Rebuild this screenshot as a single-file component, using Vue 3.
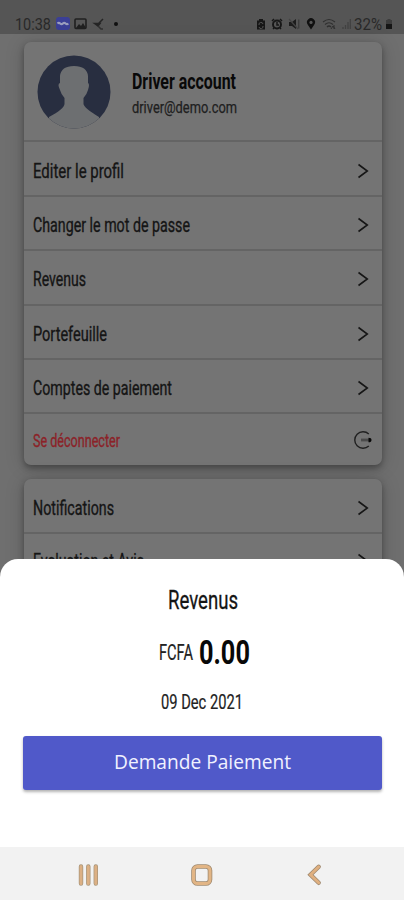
<script setup>
const account = [
  { label: 'Editer le profil', width: 91 },
  { label: 'Changer le mot de passe', width: 157 },
  { label: 'Revenus', width: 53 },
  { label: 'Portefeuille', width: 74 },
  { label: 'Comptes de paiement', width: 139 },
  { label: 'Se déconnecter', width: 87, logout: true },
]
const general = [
  { label: 'Notifications', width: 81 },
  { label: 'Evaluation et Avis', width: 111 },
]
const groups = [
  { items: account, profile: true },
  { items: general, profile: false },
]
</script>

<template>
  <div class="screen">
    <header class="status">
      <div class="status-left">
        <svg class="clock" width="36" height="18"><text x="0" y="15" textLength="36" lengthAdjust="spacingAndGlyphs">10:38</text></svg>
        <svg class="app-badge" width="14" height="14" viewBox="0 0 14 14"><rect width="14" height="13" rx="3" fill="#3b3f96" /><path d="M1.500 6.500q1.300-1.200 2.700 0t2.700 0t2.700 0t2.700 0" fill="none" stroke="#9a9dbd" stroke-width="2.200" /></svg>
        <svg class="photo" width="13" height="12" viewBox="0 0 13 12"><rect x="1" y="1" width="11" height="9.5" rx="1" fill="none" stroke="#202020" stroke-width="1.6" /><path d="M2 10l3-4 2 2 2-3 3 5z" fill="#202020" /></svg>
        <svg class="missed" width="12" height="12" viewBox="0 0 12 12"><path d="M10 1L5.500 5.500M1.500 5.500L5 8l2-2.500z" fill="#252525" stroke="#252525" stroke-width="1.500" /><path d="M5 8l3 3 2 0" fill="none" stroke="#303030" stroke-width="1.500" /></svg>
        <span class="dot"></span>
      </div>
      <div class="status-right">
        <svg width="10" height="12" viewBox="0 0 10 12"><path d="M3 1h4v1.500h2V11.500H1V2.500h2z" fill="#171717" /><path d="M3 7a2 2 0 0 1 4-1M7 8a2 2 0 0 1-4 1" fill="none" stroke="#555" stroke-width="1" /></svg>
        <svg width="12" height="12" viewBox="0 0 12 12"><circle cx="6" cy="6.500" r="4" fill="none" stroke="#171717" stroke-width="1.900" /><path d="M1 3l2-2M11 3L9 1M6 4v3h2M2 11l1-1M10 11l-1-1" fill="none" stroke="#171717" stroke-width="1.500" /></svg>
        <svg width="13" height="12" viewBox="0 0 13 12"><path d="M1 4h3l4-3v10L4 8H1z" fill="#1c1c1c" /><path d="M1 1l9 10" stroke="#444" stroke-width="1.200" /><path d="M10.800 1.500v9" stroke="#343434" stroke-width="1" /></svg>
        <svg width="10" height="12" viewBox="0 0 10 12"><path d="M5 11.500L1.800 6.700A4 4 0 1 1 8.200 6.700z" fill="#101010" /><circle cx="5" cy="4.400" r="1.600" fill="#555" /></svg>
        <svg class="wifi" width="15" height="12" viewBox="0 0 15 12"><path d="M1 4q6-5 12 0M3 6.500q4-3.500 8 0M5 9q2-2 4 0" fill="none" stroke="#303030" stroke-width="1.200" /><path d="M9 11l2-3 2 3M12 7v4" fill="none" stroke="#303030" stroke-width="1" /></svg>
        <svg width="9" height="12" viewBox="0 0 9 12"><path d="M1 11V9M3.500 11V7M6 11V4M8.300 11V1" stroke="#424242" stroke-width="1.300" /></svg>
        <svg class="clock" width="27" height="18"><text x="-2" y="15" textLength="28" lengthAdjust="spacingAndGlyphs">32%</text></svg>
        <svg class="battery" width="8" height="12" viewBox="0 0 8 12"><path d="M2.500 1h3v1H7v4H1V2h1.500z" fill="#3c3c3c" /><path d="M1 6h6v5H1z" fill="#151515" /></svg>
      </div>
    </header>

    <main class="content">
      <section v-for="(group, g) in groups" :key="g" class="card">
        <div v-if="group.profile" class="profile">
          <svg class="avatar" width="74" height="74" viewBox="0 0 74 74">
            <defs><clipPath id="avatar-clip"><circle cx="37" cy="37" r="36.500" /></clipPath></defs>
            <g clip-path="url(#avatar-clip)">
              <rect width="74" height="74" fill="#282e40" />
              <path d="M23 28V21Q24 11 37 11T51 21V28Q53 29 51 35Q50 39 46.500 43V49Q47 53 62 62V74H12V62Q27 54 27.500 49V43Q24 39 23 35Q20 29 23 28Z" fill="#6d6f71" />
            </g>
          </svg>
          <div class="identity">
            <svg class="name" width="106" height="28"><text x="0" y="22" textLength="104" lengthAdjust="spacingAndGlyphs">Driver account</text></svg>
            <svg class="email" width="106" height="22"><text x="0" y="18" textLength="105" lengthAdjust="spacingAndGlyphs">driver@demo.com</text></svg>
          </div>
        </div>
        <div v-for="item in group.items" :key="item.label" class="row" :class="{ logout: item.logout }">
          <svg class="label" :width="item.width + 2" height="28"><text x="0" y="21" :textLength="item.width" lengthAdjust="spacingAndGlyphs">{{ item.label }}</text></svg>
          <svg v-if="item.logout" class="exit" width="20" height="20" viewBox="0 0 20 20"><path d="M15.800 4A8.300 8.300 0 1 0 15.800 16" fill="none" stroke="#202020" stroke-width="1.400" /><path d="M8 10h8" stroke="#4b4b4b" stroke-width="2.800" /><path d="M15.500 7.700q3 0 3 2.300t-3 2.300z" fill="#080808" /></svg>
          <svg v-else class="chevron" width="12" height="16" viewBox="0 0 12 16"><path d="M1.500 1.500L10.300 8 1.500 14.500" fill="none" stroke="#161616" stroke-width="1.600" /></svg>
        </div>
      </section>
    </main>

    <section class="sheet">
      <svg class="title" width="72" height="30"><text x="0" y="23" textLength="70" lengthAdjust="spacingAndGlyphs">Revenus</text></svg>
      <div class="amount">
        <svg class="currency" width="35" height="34"><text x="0" y="24" transform="scale(.665 1)">FCFA</text></svg>
        <svg class="value" width="52" height="34"><text x="0" y="28" transform="scale(.745 1)">0.00</text></svg>
      </div>
      <svg class="date" width="83" height="24"><text x="0" y="18.500" textLength="82" lengthAdjust="spacingAndGlyphs">09 Dec 2021</text></svg>
      <button class="pay"><svg width="180" height="28"><text x="1" y="20" textLength="177" lengthAdjust="spacingAndGlyphs">Demande Paiement</text></svg></button>
    </section>

    <nav class="navbar">
      <svg width="24" height="24" viewBox="0 0 24 24"><path d="M4 3.500v17M11.300 3.500v17M18.800 3.500v17" stroke="#a59378" stroke-width="4.400" stroke-linecap="round" /><path d="M4 3.500v17M11.300 3.500v17M18.800 3.500v17" stroke="#dcb084" stroke-width="3" stroke-linecap="round" /></svg>
      <svg width="24" height="24" viewBox="0 0 24 24"><rect x="3.500" y="3.500" width="16.500" height="17" rx="4" fill="none" stroke="#a08a70" stroke-width="4.600" /><rect x="3.500" y="3.500" width="16.500" height="17" rx="4" fill="none" stroke="#e2b585" stroke-width="3" /></svg>
      <svg width="24" height="24" viewBox="0 0 24 24"><path d="M15.700 3.800L7.500 11.800l8.200 8" fill="none" stroke="#a08a70" stroke-width="4.400" stroke-linecap="round" /><path d="M15.700 3.800L7.500 11.800l8.200 8" fill="none" stroke="#e0b080" stroke-width="2.800" stroke-linecap="round" /></svg>
    </nav>
  </div>
</template>

<style>
body { margin: 0; overflow: hidden; }
</style>

<style scoped>
.screen {
  position: relative;
  display: flex;
  flex-direction: column;
  width: 404px;
  height: 900px;
  overflow: hidden;
  background: #6f6f6f;
  font-family: Roboto, "Liberation Sans", sans-serif;
}
svg { display: block; flex: none; overflow: visible; }
.status {
  display: flex;
  justify-content: space-between;
  flex: none;
  height: 34px;
  box-sizing: border-box;
  padding: 14.5px 11px 0 15px;
  background: #555;
}
.status-left, .status-right { display: flex; align-items: center; height: 18px; }
.clock { font-size: 16.5px; fill: #292929; }
.app-badge { margin-left: 5px; }
.photo { margin-left: 4px; }
.missed { margin-left: 6px; }
.dot { width: 4px; height: 4px; margin-left: 9px; border-radius: 50%; background: #101010; }
.status-right { gap: 5px; }
.wifi { margin-left: 1px; }
.battery { margin-left: -3px; }
.content {
  display: flex;
  flex-direction: column;
  gap: 13.5px;
  padding: 7.5px 22px 0 23.5px;
}
.card {
  flex: none;
  background: #747474;
  border-radius: 7px;
  box-shadow: 0 3px 6px rgba(0, 0, 0, .32), 0 2px 20px rgba(0, 0, 0, .16);
}
.profile {
  display: flex;
  box-sizing: border-box;
  height: 98.5px;
  padding: 13.5px 0 0 13.5px;
}
.identity { margin-left: 21px; padding-top: 11.5px; }
.name { font-size: 22px; font-weight: 700; fill: #090909; }
.email { font-size: 17px; fill: #202020; stroke: #202020; stroke-width: .25px; }
.row {
  display: flex;
  align-items: center;
  justify-content: space-between;
  height: 54.25px;
  box-sizing: border-box;
  padding: 4px 13px 0 9.5px;
  border-top: 2px solid #646464;
}
.profile + .row { height: 55px; }
.card:nth-child(2) .row { height: 53.5px; padding-top: 3px; }
.card:nth-child(2) .row:first-child { border-top-color: transparent; }
.label { font-size: 19.5px; fill: #151515; stroke: #151515; stroke-width: .35px; }
.logout { height: 53px; padding: 0 9px 0 9.5px; }
.logout .label { fill: #8c2228; stroke: #8c2228; font-size: 18.5px; }
.sheet {
  position: absolute;
  z-index: 1;
  top: 559px;
  left: 0;
  right: 0;
  height: 288px;
  display: flex;
  flex-direction: column;
  align-items: center;
  box-sizing: border-box;
  padding-top: 27px;
  background: #fff;
  border-radius: 18px 18px 0 0;
}
.title { margin-left: 4px; font-size: 25px; fill: #151515; stroke: #151515; stroke-width: .3px; }
.amount { display: flex; gap: 5px; margin: 20px 0 0 5px; }
.currency { font-size: 22px; fill: #222; stroke: #222; stroke-width: .2px; }
.value { font-size: 34px; font-weight: 700; fill: #080808; }
.date { margin-top: 20px; font-size: 20px; fill: #222; stroke: #222; stroke-width: .2px; }
.pay {
  display: flex;
  align-items: center;
  justify-content: center;
  width: 359px;
  height: 54px;
  margin: 21.5px 0 0 1px;
  padding: 0;
  border: 0;
  border-radius: 3px;
  background: #5059c9;
  box-shadow: 0 2px 3px rgba(0, 0, 0, .3);
  font-family: "Open Sans", sans-serif;
  font-size: 20px;
  fill: #f0f2ff;
}
.navbar {
  position: absolute;
  left: 0;
  right: 0;
  bottom: 0;
  display: flex;
  justify-content: space-between;
  box-sizing: border-box;
  height: 53px;
  padding: 15.5px 77px 0;
  background: #f2f2f2;
}
</style>
